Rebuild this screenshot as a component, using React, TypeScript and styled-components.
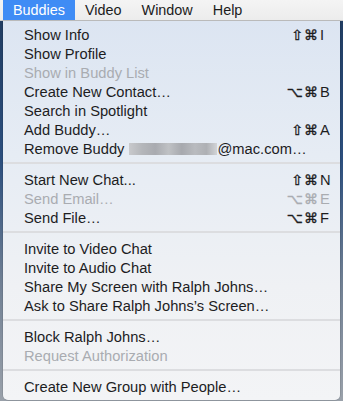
import styled, { createGlobalStyle } from "styled-components";

const GlobalStyle = createGlobalStyle`
    html, body {
        margin: 0;
        padding: 0;
        width: 343px;
        height: 401px;
        overflow: hidden;
    }
    body {
        font-family: "Liberation Sans", "DejaVu Sans", Arial, sans-serif;
        -webkit-font-smoothing: antialiased;
    }
`;

const Screen = styled.div`
    width: 343px;
    height: 401px;
    display: flex;
    flex-direction: column;
    background: linear-gradient(180deg, #1f3a5e 0%, #2c4f7e 40%, #6f7f93 70%, #9aa1aa 100%);
`;

const MenuBar = styled.div`
    height: 22px;
    display: flex;
    align-items: stretch;
    padding-left: 3px;
    background: linear-gradient(180deg, #f4f4f4 0%, #ececec 100%);
    border-bottom: 1px solid #c9c9c9;
    box-sizing: border-box;
`;

const BarItem = styled.div<{ $active?: boolean }>`
    display: flex;
    align-items: center;
    padding: 0 10px;
    font-size: 14.4px;
    color: ${p => (p.$active ? "#ffffff" : "#1c1c1c")};
    background: ${p => (p.$active ? "#3f8cf5" : "transparent")};
`;

const Body = styled.div`
    flex: 1;
    display: flex;
    padding: 0 3px;
`;

const Menu = styled.div`
    flex: 1;
    display: flex;
    flex-direction: column;
    padding: 4px 0 4px;
    margin-bottom: 1px;
    border-radius: 0 0 5px 5px;
    background: linear-gradient(180deg, #dce5f2 0%, #e6ecf4 35%, #eff1f4 70%, #f3f4f6 100%);
    box-shadow: 0 0 0 0.5px rgba(0, 0, 0, 0.15);
`;

const Row = styled.div<{ $disabled?: boolean }>`
    height: 19px;
    display: flex;
    align-items: center;
    padding: 0 9px 0 21px;
    font-size: 14.7px;
    white-space: nowrap;
    color: ${p => (p.$disabled ? "#a9acb1" : "#1d1d1f")};
`;

const Label = styled.span`
    flex: 1;
    display: flex;
    align-items: center;
`;

const Redacted = styled.span`
    display: inline-block;
    width: 88px;
    height: 12px;
    margin-left: 5px;
    background: linear-gradient(90deg, #c8c9cc 0%, #b4b6ba 15%, #a9abb0 30%, #bfc1c4 45%, #a7a9ae 60%, #b9bbbf 75%, #aeb0b4 88%, #d2d4d7 100%);
    filter: blur(0.6px);
`;

const Shortcut = styled.span`
    display: flex;
    align-items: center;
    font-family: "DejaVu Sans", "Liberation Sans", sans-serif;
    font-size: 14px;
    -webkit-text-stroke: 0.4px currentColor;
`;

const Mods = styled.span`
    text-align: right;
    letter-spacing: 1px;
    margin-right: 1px;
`;

const Key = styled.span`
    width: 11px;
    font-family: "Liberation Sans", sans-serif;
    font-size: 14.7px;
    -webkit-text-stroke: 0;
`;

const Separator = styled.div`
    height: 12px;
    display: flex;
    align-items: flex-start;
    &::after {
        content: "";
        flex: 1;
        margin-top: 4px;
        height: 2px;
        background: #dcdde0;
    }
`;

interface IItem {
    label: string;
    mods?: string;
    keyChar?: string;
    disabled?: boolean;
    redact?: boolean;
}

const groups: IItem[][] = [
    [
        { label: "Show Info", mods: "⇧⌘", keyChar: "I" },
        { label: "Show Profile" },
        { label: "Show in Buddy List", disabled: true },
        { label: "Create New Contact…", mods: "⌥⌘", keyChar: "B" },
        { label: "Search in Spotlight" },
        { label: "Add Buddy…", mods: "⇧⌘", keyChar: "A" },
        { label: "@mac.com…", redact: true },
    ],
    [
        { label: "Start New Chat...", mods: "⇧⌘", keyChar: "N" },
        { label: "Send Email…", mods: "⌥⌘", keyChar: "E", disabled: true },
        { label: "Send File…", mods: "⌥⌘", keyChar: "F" },
    ],
    [
        { label: "Invite to Video Chat" },
        { label: "Invite to Audio Chat" },
        { label: "Share My Screen with Ralph Johns…" },
        { label: "Ask to Share Ralph Johns’s Screen…" },
    ],
    [
        { label: "Block Ralph Johns…" },
        { label: "Request Authorization", disabled: true },
    ],
    [{ label: "Create New Group with People…" }],
];

function App() {
    return (
        <Screen>
            <GlobalStyle />
            <MenuBar>
                <BarItem $active>Buddies</BarItem>
                <BarItem>Video</BarItem>
                <BarItem>Window</BarItem>
                <BarItem>Help</BarItem>
            </MenuBar>
            <Body>
                <Menu>
                    {groups.map((group, gi) => (
                        <div key={gi}>
                            {gi > 0 && <Separator />}
                            {group.map(item => (
                                <Row key={item.label} $disabled={item.disabled}>
                                    <Label>
                                        {item.redact ? (
                                            <>
                                                Remove Buddy
                                                <Redacted />
                                                {item.label}
                                            </>
                                        ) : (
                                            item.label
                                        )}
                                    </Label>
                                    {item.keyChar && (
                                        <Shortcut>
                                            <Mods>{item.mods}</Mods>
                                            <Key>{item.keyChar}</Key>
                                        </Shortcut>
                                    )}
                                </Row>
                            ))}
                        </div>
                    ))}
                </Menu>
            </Body>
        </Screen>
    );
}

export default App;
